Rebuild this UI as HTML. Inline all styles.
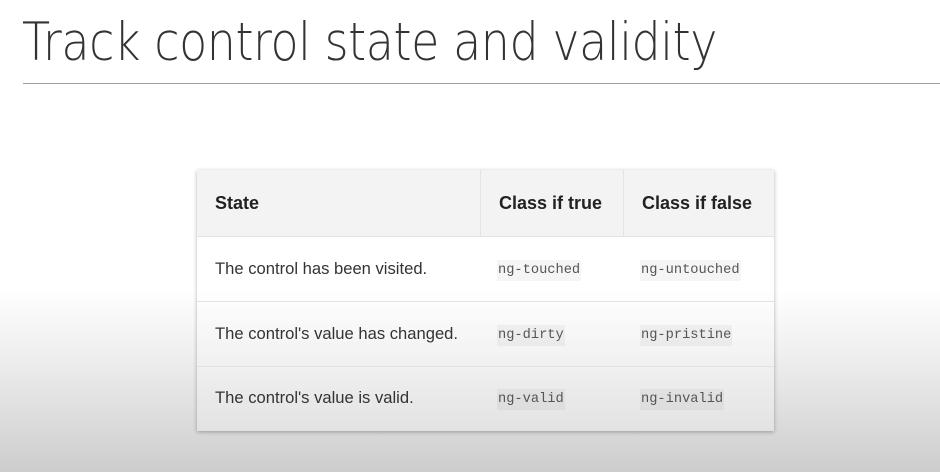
<!DOCTYPE html>
<html><head><style>
html,body{margin:0;padding:0}
body{width:940px;height:472px;position:relative;overflow:hidden;font-family:"Liberation Sans",sans-serif;
background:linear-gradient(to bottom,#fff 0px,#fff 290px,#f0f0f0 350px,#dcdcdc 420px,#cdcdcd 472px);}
.title{position:absolute;left:22px;top:12px;font-size:53px;color:#333;white-space:nowrap;transform:scaleX(0.867);transform-origin:left top;letter-spacing:-0.5px;font-family:"DejaVu Sans","Liberation Sans",sans-serif;font-weight:200}
.rule{position:absolute;left:23px;top:83px;width:917px;height:1px;background:#a0a0a0}
.tbl{position:absolute;left:197px;top:170px;width:577px;height:261px;box-shadow:0 1px 4px rgba(0,0,0,0.3);background:rgba(255,255,255,0.25)}
.hd{position:absolute;left:0;top:0;width:577px;height:66px;background:#f3f3f3;border-bottom:1px solid #e2e2e2}
.vl{position:absolute;top:0;width:1px;height:66px;background:#e4e4e4}
.row{position:absolute;left:0;width:577px;height:65px;border-bottom:1px solid #e2e2e2}
.t{position:absolute;font-size:16.6px;color:#333;white-space:nowrap}
.h{position:absolute;font-size:18px;font-weight:bold;color:#222;white-space:nowrap}
.c{position:absolute;font-family:"Liberation Mono",monospace;font-size:13.7px;color:#555;background:rgba(0,0,0,0.04);padding:3px 1px;white-space:nowrap}
</style></head><body>
<div class="title">Track control state and validity</div>
<div class="rule"></div>
<div class="tbl">
<div class="hd"></div>
<div class="vl" style="left:283px"></div>
<div class="vl" style="left:426px"></div>
<div class="h" style="left:18px;top:23px">State</div>
<div class="h" style="left:302px;top:23px">Class if true</div>
<div class="h" style="left:445px;top:23px">Class if false</div>
<div class="row" style="top:66px"></div>
<div class="row" style="top:131px"></div>
<div class="t" style="left:18px;top:89px">The control has been visited.</div>
<div class="c" style="left:300px;top:90px">ng-touched</div>
<div class="c" style="left:443px;top:90px">ng-untouched</div>
<div class="t" style="left:18px;top:154px">The control's value has changed.</div>
<div class="c" style="left:300px;top:155px">ng-dirty</div>
<div class="c" style="left:443px;top:155px">ng-pristine</div>
<div class="t" style="left:18px;top:218px">The control's value is valid.</div>
<div class="c" style="left:300px;top:219px">ng-valid</div>
<div class="c" style="left:443px;top:219px">ng-invalid</div>
</div>
</body></html>
